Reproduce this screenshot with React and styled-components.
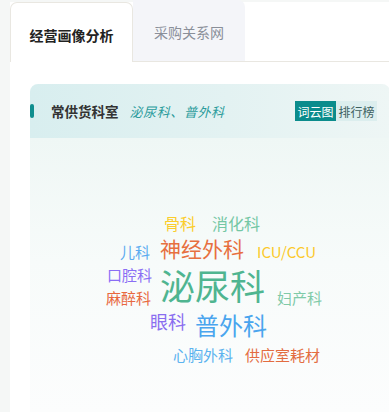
import React from 'react';
import styled, { createGlobalStyle } from 'styled-components';

const GlobalStyle = createGlobalStyle`
  html, body {
    margin: 0;
    padding: 0;
    background: #f5f7f6;
    overflow: hidden;
    font-family: "Noto Sans CJK SC", "Noto Sans", "Liberation Sans", sans-serif;
  }
`;

const words = [
  { text: '骨科', x: 134, y: 77, size: 16, color: '#fbcd2c' },
  { text: '消化科', x: 182, y: 77, size: 16, color: '#74c7a4' },
  { text: '儿科', x: 90, y: 106, size: 15, color: '#5aabf0' },
  { text: '神经外科', x: 130, y: 100, size: 21, color: '#e7703f' },
  { text: 'ICU/CCU', x: 227, y: 106, size: 15, color: '#fcc92a' },
  { text: '口腔科', x: 77, y: 129, size: 15, color: '#8a6ef5' },
  { text: '泌尿科', x: 130, y: 129, size: 35, color: '#4fb590' },
  { text: '麻醉科', x: 76, y: 152, size: 15, color: '#e8693f' },
  { text: '妇产科', x: 247, y: 152, size: 15, color: '#7fcaa8' },
  { text: '眼科', x: 120, y: 174, size: 18, color: '#8a6ef0' },
  { text: '普外科', x: 165, y: 175, size: 24, color: '#4aa5ee' },
  { text: '心胸外科', x: 143, y: 209, size: 15, color: '#5cb3ef' },
  { text: '供应室耗材', x: 215, y: 209, size: 15, color: '#e36c40' },
];

const App = () => (
  <Page>
    <GlobalStyle />
    <Card>
      <TabBar>
        <Tab $active>经营画像分析</Tab>
        <Tab>采购关系网</Tab>
        <TabFiller />
      </TabBar>
      <Panel>
        <PanelHeader>
          <Accent />
          <PanelTitle>常供货科室</PanelTitle>
          <PanelValue>泌尿科、普外科</PanelValue>
          <Toggle>
            <ToggleButton $active>词云图</ToggleButton>
            <ToggleButton>排行榜</ToggleButton>
          </Toggle>
        </PanelHeader>
        <PanelBody>
          <Cloud>
            {words.map((w) => (
              <Word key={w.text} $x={w.x} $y={w.y} $size={w.size} $color={w.color}>
                {w.text}
              </Word>
            ))}
          </Cloud>
        </PanelBody>
      </Panel>
    </Card>
  </Page>
);

const Page = styled.div`
  width: 389px;
  height: 412px;
  padding-left: 10px;
  box-sizing: border-box;
  overflow: hidden;
`;

const Card = styled.div`
  width: 400px;
  height: 412px;
  display: flex;
  flex-direction: column;
  background: linear-gradient(to bottom, #f5f7f6 0, #f5f7f6 2px, #ffffff 2px);
`;

const TabBar = styled.div`
  display: flex;
  align-items: flex-end;
  height: 62px;
  flex-shrink: 0;
`;

const Tab = styled.div`
  box-sizing: border-box;
  display: flex;
  align-items: center;
  justify-content: center;
  font-size: 14px;
  ${(p) =>
    p.$active
      ? `
    width: 123px;
    height: 60px;
    background: #ffffff;
    border: 1px solid #e9e7e1;
    border-bottom: none;
    border-radius: 7px 7px 0 0;
    color: #222;
    font-weight: 700;
    padding-top: 4px;
  `
      : `
    width: 112px;
    height: 62px;
    background: #f4f5f9;
    border-bottom: 1px solid #e9e7e1;
    border-radius: 0 7px 0 0;
    color: #8a8f99;
    padding-top: 2px;
  `}
`;

const TabFiller = styled.div`
  flex: 1;
  height: 62px;
  box-sizing: border-box;
  border-bottom: 1px solid #e9e7e1;
`;

const Panel = styled.div`
  margin: 22px 0 0 20px;
  width: 360px;
  flex: 1;
  display: flex;
  flex-direction: column;
  border-radius: 8px 8px 0 0;
  overflow: hidden;
`;

const PanelHeader = styled.div`
  height: 54px;
  flex-shrink: 0;
  display: flex;
  align-items: center;
  padding-right: 13px;
  background: linear-gradient(to right, #d8eeef 0%, #e3f2f2 55%, #eef6f5 100%);
`;

const Accent = styled.span`
  width: 4px;
  height: 14px;
  border-radius: 2px;
  background: #0f8e8e;
  margin-right: 17px;
`;

const PanelTitle = styled.span`
  font-size: 13.5px;
  font-weight: 700;
  color: #333;
  margin-right: 11px;
`;

const PanelValue = styled.span`
  font-size: 13px;
  font-style: italic;
  letter-spacing: 0.6px;
  color: #2b9c9c;
`;

const Toggle = styled.div`
  margin-left: auto;
  display: flex;
`;

const ToggleButton = styled.span`
  width: 41px;
  height: 20px;
  display: flex;
  align-items: center;
  justify-content: center;
  font-size: 12px;
  background: ${(p) => (p.$active ? '#0b8c8c' : '#dceeee')};
  color: ${(p) => (p.$active ? '#ffffff' : '#3d6060')};
`;

const PanelBody = styled.div`
  flex: 1;
  background: linear-gradient(to bottom, #eff7f5 0%, #f7fbfa 45%, #fcfdfd 100%);
`;

const Cloud = styled.div`
  position: relative;
  height: 274px;
`;

const Word = styled.span`
  position: absolute;
  left: ${(p) => p.$x}px;
  top: ${(p) => p.$y}px;
  font-size: ${(p) => p.$size}px;
  line-height: 1;
  white-space: nowrap;
  color: ${(p) => p.$color};
`;

export default App;
